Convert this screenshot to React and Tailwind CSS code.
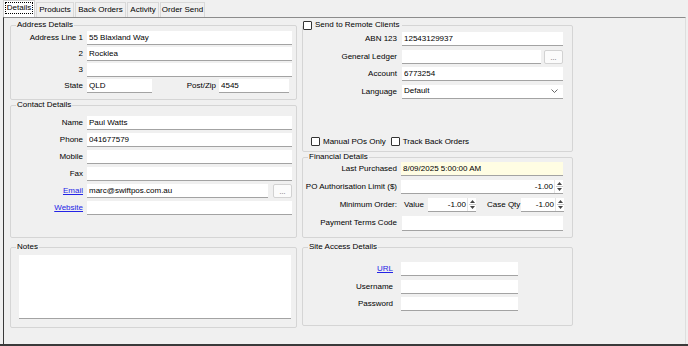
import React from 'react'

const inputCls = 'block h-[14px] bg-white border-b border-[#a3a3a3] px-[2px] text-black outline-none'

function TextBox({ value = '', className = '' }) {
  return <input readOnly value={value} className={`${inputCls} ${className}`} />
}

function Spin({ value, className = '' }) {
  return (
    <div className={`flex h-[14px] bg-white border-b border-[#a3a3a3] ${className}`}>
      <span className="flex-1 text-right pr-[1px] leading-[13px]">{value}</span>
      <div className="w-[9px] flex flex-col items-center justify-center border-l border-[#e4e4e4]">
        <svg width="5" height="3" viewBox="0 0 5 3" className="mb-[1px]">
          <path d="M0 3 L2.5 0 L5 3 Z" fill="#444" />
        </svg>
        <div className="w-[7px] h-px bg-[#c8c8c8]" />
        <svg width="5" height="3" viewBox="0 0 5 3" className="mt-[1px]">
          <path d="M0 0 L2.5 3 L5 0 Z" fill="#444" />
        </svg>
      </div>
    </div>
  )
}

function Dots({ className = '' }) {
  return (
    <button className={`h-[14px] w-[19px] bg-[#fbfbfb] border border-[#d2d2d2] rounded-[2px] text-[7px] leading-[8px] text-[#555] flex items-end justify-center pb-[1px] ${className}`}>
      ...
    </button>
  )
}

function Check({ label, className = '' }) {
  return (
    <label className={`flex items-center gap-[3px] whitespace-nowrap ${className}`}>
      <span className="w-[9px] h-[9px] border border-[#333] bg-white rounded-[1px]" />
      <span>{label}</span>
    </label>
  )
}

function Group({ legend, className = '', children }) {
  return (
    <fieldset className={`border border-[#d5d5d5] rounded-[2px] ${className}`}>
      <legend className="ml-[5px] px-[1px] leading-[10px]">{legend}</legend>
      {children}
    </fieldset>
  )
}

function Link({ children }) {
  return <span className="text-[#2424e6] underline">{children}</span>
}

function LeftRow({ label, children }) {
  return (
    <div className="flex items-center h-[14px]">
      <span className="w-[72px] text-right shrink-0">{label}</span>
      <div className="ml-[4px] flex items-center">{children}</div>
    </div>
  )
}

function RightRow({ label, labelW = 'w-[94px]', gap = 'ml-[5px]', children }) {
  return (
    <div className="flex items-center h-[14px] whitespace-nowrap">
      <span className={`${labelW} text-right shrink-0`}>{label}</span>
      <div className={`${gap} flex items-center`}>{children}</div>
    </div>
  )
}

const tabs = ['Details', 'Products', 'Back Orders', 'Activity', 'Order Send']
const tabW = ['w-[32px]', 'w-[38px]', 'w-[51px]', 'w-[32px]', 'w-[45px]']

export default function App() {
  return (
    <div className="w-[688px] h-[346px] bg-[#f0f0f0] border-b-2 border-[#3a3a3a] flex flex-col text-[8px] leading-[10px] text-black font-['Liberation_Sans',Arial,sans-serif] overflow-hidden">
      {/* Tabs */}
      <div className="h-[17px] flex items-end pl-[3px] gap-[1px] shrink-0 whitespace-nowrap">
        {tabs.map((t, i) =>
          i === 0 ? (
            <div key={t} className={`${tabW[i]} shrink-0 h-[17px] bg-white border border-b-0 border-[#cfcfcf] flex items-start justify-center pt-[1px]`}>
              <span className="border border-dotted border-black px-[1px] leading-[10px]">{t}</span>
            </div>
          ) : (
            <div key={t} className={`${tabW[i]} shrink-0 h-[15px] bg-[#f0f0f0] border border-b-0 border-[#d9d9d9] flex items-center justify-center`}>
              {t}
            </div>
          )
        )}
      </div>

      {/* Tab page */}
      <div className="flex-1 ml-[3px] mr-[2px] border-t border-l border-r border-t-[#8c8c8c] border-l-[#3a3a3a] border-r-[#dedede] flex gap-[5px] pl-[6px] pt-[2px]">
        {/* Left column */}
        <div className="w-[287px] flex flex-col">
          <Group legend="Address Details" className="h-[80px]">
            <div className="flex flex-col gap-[2px] pt-[1px]">
              <LeftRow label="Address Line 1"><TextBox value="55 Blaxland Way" className="w-[205px]" /></LeftRow>
              <LeftRow label="2"><TextBox value="Rocklea" className="w-[205px]" /></LeftRow>
              <LeftRow label="3"><TextBox className="w-[205px]" /></LeftRow>
              <LeftRow label="State">
                <TextBox value="QLD" className="w-[65px]" />
                <span className="w-[67px] text-right pr-[3px]">Post/Zip</span>
                <TextBox value="4545" className="w-[70px]" />
              </LeftRow>
            </div>
          </Group>

          <Group legend="Contact Details" className="h-[138px]">
            <div className="flex flex-col gap-[3px] pt-[6px]">
              <LeftRow label="Name"><TextBox value="Paul Watts" className="w-[205px]" /></LeftRow>
              <LeftRow label="Phone"><TextBox value="041677579" className="w-[205px]" /></LeftRow>
              <LeftRow label="Mobile"><TextBox className="w-[205px]" /></LeftRow>
              <LeftRow label="Fax"><TextBox className="w-[205px]" /></LeftRow>
              <LeftRow label={<Link>Email</Link>}>
                <TextBox value="marc@swiftpos.com.au" className="w-[181px]" />
                <Dots className="ml-[5px] w-[18px]" />
              </LeftRow>
              <LeftRow label={<Link>Website</Link>}><TextBox className="w-[205px]" /></LeftRow>
            </div>
          </Group>

          <Group legend="Notes" className="h-[86px] mt-[4px]">
            <div className="pl-[8px] pt-[3px]">
              <textarea readOnly className="block w-[272px] h-[64px] bg-white border-b border-[#a3a3a3] resize-none outline-none" />
            </div>
          </Group>
        </div>

        {/* Right column */}
        <div className="w-[271px] flex flex-col">
          <fieldset className="h-[132px] border border-[#d5d5d5] rounded-[2px]">
            <legend className="leading-[10px] pr-[2px]">
              <Check label="Send to Remote Clients" />
            </legend>
            <div className="flex flex-col gap-[3.5px] pt-[2px]">
              <RightRow label="ABN 123"><TextBox value="12543129937" className="w-[161px]" /></RightRow>
              <RightRow label="General Ledger">
                <TextBox className="w-[139px]" />
                <Dots className="ml-[3px]" />
              </RightRow>
              <RightRow label="Account"><TextBox value="6773254" className="w-[161px]" /></RightRow>
              <RightRow label="Language">
                <div className="w-[161px] h-[14px] bg-white border-b border-[#a3a3a3] flex items-center justify-between pl-[2px] pr-[5px]">
                  <span>Default</span>
                  <svg width="7" height="4" viewBox="0 0 7 4">
                    <path d="M0.5 0.5 L3.5 3.5 L6.5 0.5" stroke="#555" strokeWidth="0.9" fill="none" />
                  </svg>
                </div>
              </RightRow>
            </div>
            <div className="flex items-center gap-[5px] pl-[8px] mt-[37px] h-[12px]">
              <Check label="Manual POs Only" />
              <Check label="Track Back Orders" />
            </div>
          </fieldset>

          <Group legend="Financial Details" className="h-[86px]">
            <div className="flex flex-col gap-[4px]">
              <RightRow label="Last Purchased" gap="ml-[4px]">
                <TextBox value="8/09/2025 5:00:00 AM" className="w-[162px] !bg-[#fffde3]" />
              </RightRow>
              <RightRow label="PO Authorisation Limit ($)" gap="ml-[4px]">
                <Spin value="-1.00" className="w-[162px]" />
              </RightRow>
              <RightRow label="Minimum Order:" gap="ml-[7px]">
                <span className="w-[20px]">Value</span>
                <Spin value="-1.00" className="w-[48px] ml-[4px]" />
                <span className="ml-[11px] w-[32px]">Case Qty</span>
                <Spin value="-1.00" className="w-[43px] ml-[2px]" />
              </RightRow>
              <RightRow label="Payment Terms Code" gap="ml-[5px]">
                <TextBox className="w-[161px] h-[15px]" />
              </RightRow>
            </div>
          </Group>

          <Group legend="Site Access Details" className="h-[84px] mt-[4px]">
            <div className="flex flex-col gap-[3.5px] pt-[10px]">
              <RightRow label={<Link>URL</Link>} labelW="w-[90px]" gap="ml-[8px]"><TextBox className="w-[117px]" /></RightRow>
              <RightRow label="Username" labelW="w-[90px]" gap="ml-[8px]"><TextBox className="w-[117px]" /></RightRow>
              <RightRow label="Password" labelW="w-[90px]" gap="ml-[8px]"><TextBox className="w-[117px]" /></RightRow>
            </div>
          </Group>
        </div>
      </div>
    </div>
  )
}
